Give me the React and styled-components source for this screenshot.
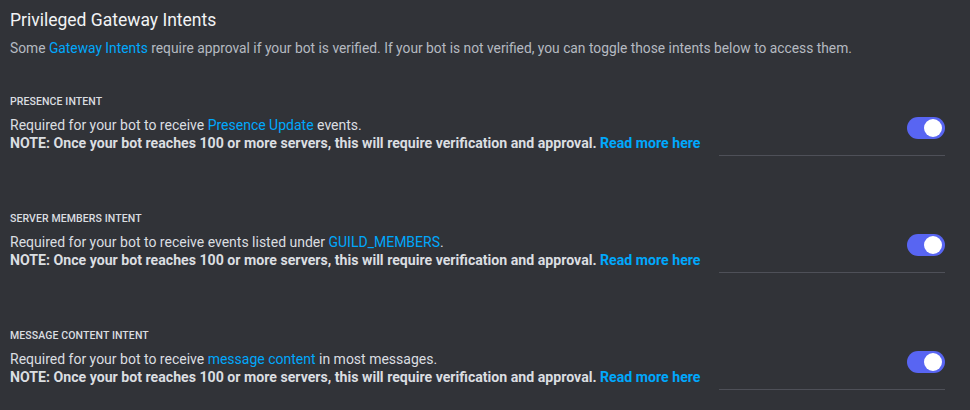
import React from "react";
import styled, { createGlobalStyle } from "styled-components";

const GlobalStyle = createGlobalStyle`
  html, body {
    margin: 0;
    padding: 0;
    background: #313338;
  }
  body {
    font-family: Roboto, "Noto Sans", sans-serif;
    color: #dbdee1;
  }
`;

const intents = [
  {
    title: "Presence Intent",
    before: "Required for your bot to receive ",
    link: "Presence Update",
    after: " events.",
  },
  {
    title: "Server Members Intent",
    before: "Required for your bot to receive events listed under ",
    link: "GUILD_MEMBERS",
    after: ".",
  },
  {
    title: "Message Content Intent",
    before: "Required for your bot to receive ",
    link: "message content",
    after: " in most messages.",
  },
];

const Page = styled.div`
  width: 970px;
  height: 410px;
  box-sizing: border-box;
  padding: 8px 25px 0 10px;
  overflow: hidden;
`;

const Title = styled.h2`
  margin: 0;
  font-size: 17.5px;
  line-height: 24px;
  font-weight: 400;
  color: #f2f3f5;
`;

const Subtitle = styled.p`
  margin: 6px 0 0;
  font-size: 13.8px;
  line-height: 20px;
  color: #b5bac1;
`;

const Link = styled.a`
  color: #00a8fc;
  text-decoration: none;
  font-weight: ${(p) => (p.$bold ? 700 : "inherit")};
`;

const Section = styled.section`
  margin-top: 56px;
  &:first-of-type {
    margin-top: 37px;
  }
`;

const Heading = styled.h3`
  margin: 0 0 8px;
  font-size: 10.5px;
  line-height: 14px;
  font-weight: 500;
  text-transform: uppercase;
  color: #dbdee1;
  letter-spacing: 0.01em;
`;

const Row = styled.div`
  display: flex;
  align-items: flex-start;
  justify-content: space-between;
`;

const Description = styled.div`
  font-size: 14px;
  line-height: 17.5px;
  color: #dbdee1;
`;

const Note = styled.strong`
  display: block;
  font-size: 14.15px;
  font-weight: 700;
  color: #dbdee1;
`;

const Switch = styled.div`
  width: 38px;
  height: 22px;
  border-radius: 11px;
  background: #5865f2;
  position: relative;
  flex-shrink: 0;

  &::after {
    content: "";
    position: absolute;
    top: 2px;
    right: 3px;
    width: 18px;
    height: 18px;
    border-radius: 50%;
    background: #ffffff;
  }
`;

const Divider = styled.div`
  width: 226px;
  height: 1px;
  margin: 3px 0 0 auto;
  background: #4e5058;
`;

export default function App() {
  return (
    <>
      <GlobalStyle />
      <Page>
        <Title>Privileged Gateway Intents</Title>
        <Subtitle>
          Some <Link href="#">Gateway Intents</Link> require approval if your
          bot is verified. If your bot is not verified, you can toggle those
          intents below to access them.
        </Subtitle>
        {intents.map((intent) => (
          <Section key={intent.title}>
            <Heading>{intent.title}</Heading>
            <Row>
              <Description>
                {intent.before}
                <Link href="#">{intent.link}</Link>
                {intent.after}
                <Note>
                  NOTE: Once your bot reaches 100 or more servers, this will
                  require verification and approval.{" "}
                  <Link href="#" $bold>
                    Read more here
                  </Link>
                </Note>
              </Description>
              <Switch />
            </Row>
            <Divider />
          </Section>
        ))}
      </Page>
    </>
  );
}
